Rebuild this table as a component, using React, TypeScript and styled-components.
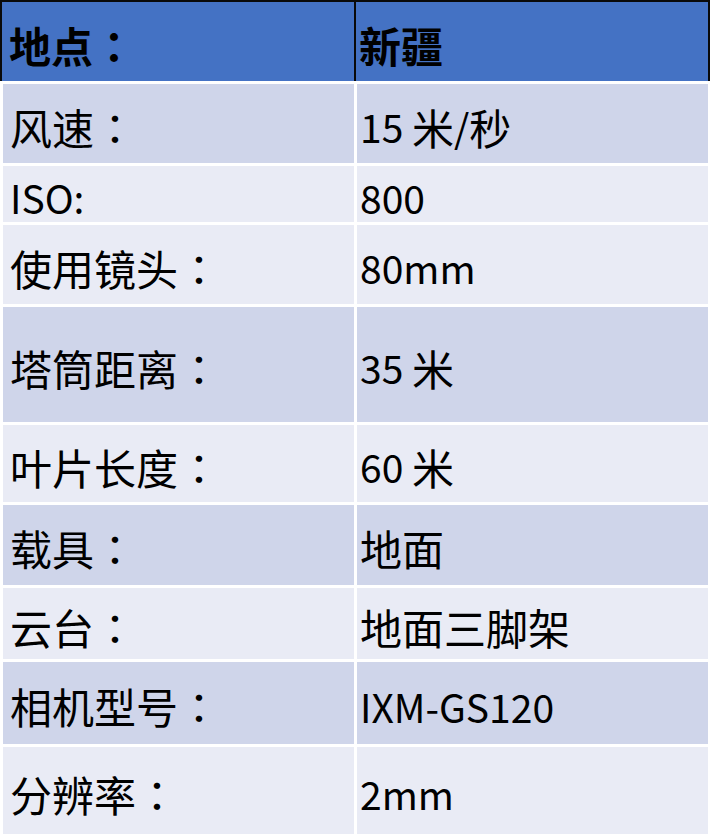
import React from "react";
import styled, { createGlobalStyle } from "styled-components";

const GlobalStyle = createGlobalStyle`
  html, body {
    margin: 0;
    padding: 0;
    background: #ffffff;
  }
  body {
    font-family: "Noto Sans CJK SC", "Noto Sans", sans-serif;
  }
`;

const Sheet = styled.div`
  width: 712px;
  display: flex;
  flex-direction: column;
  gap: 3px;
`;

const HeaderRow = styled.div`
  width: 710px;
  height: 81px;
  box-sizing: border-box;
  display: grid;
  grid-template-columns: 352px 2px 352px;
  border-top: 2px solid #0a0a0a;
  border-left: 2px solid #0a0a0a;
  border-right: 2px solid #0a0a0a;
  background: #4472c4;
`;

const HeaderDivider = styled.div`
  background: #0a0a0a;
`;

const HeaderCell = styled.div<{ $pad: number }>`
  display: flex;
  align-items: center;
  padding-left: ${(p) => p.$pad}px;
  padding-top: 6px;
  font-size: 42px;
  font-weight: 700;
  line-height: 1;
  color: #000000;
  white-space: nowrap;
`;

const Body = styled.div`
  display: grid;
  grid-template-columns: 351px 351px;
  column-gap: 3px;
  row-gap: 3px;
  padding-left: 3px;
`;

const Cell = styled.div<{ $h: number; $dark: boolean; $pad: number }>`
  height: ${(p) => p.$h}px;
  background: ${(p) => (p.$dark ? "#cfd5ea" : "#e9ebf5")};
  display: flex;
  align-items: center;
  box-sizing: border-box;
  padding-left: ${(p) => p.$pad}px;
  padding-top: 6px;
  font-size: 42px;
  line-height: 1;
  color: #000000;
  white-space: pre;
`;

const Latin = styled.span`
  font-size: 39px;
`;

const Colon = styled.span`
  font-family: "Noto Sans CJK TC", "Noto Sans CJK SC", sans-serif;
`;

function Text({ value }: { value: string }) {
  const parts = value.match(/[\x20-\x7e]+|[^\x20-\x7e]+/g) || [];
  return (
    <>
      {parts.map((part, i) => {
        if (/^[\x20-\x7e]+$/.test(part)) return <Latin key={i}>{part}</Latin>;
        if (part.endsWith("：")) {
          return (
            <React.Fragment key={i}>
              {part.slice(0, -1)}
              <Colon>：</Colon>
            </React.Fragment>
          );
        }
        return <React.Fragment key={i}>{part}</React.Fragment>;
      })}
    </>
  );
}

const rows: { label: string; value: string; h: number; dark: boolean }[] = [
  { label: "风速：", value: "15 米/秒", h: 79, dark: true },
  { label: "ISO:", value: "800", h: 56, dark: false },
  { label: "使用镜头：", value: "80mm", h: 79, dark: false },
  { label: "塔筒距离：", value: "35 米", h: 115, dark: true },
  { label: "叶片长度：", value: "60 米", h: 77, dark: false },
  { label: "载具：", value: "地面", h: 80, dark: true },
  { label: "云台：", value: "地面三脚架", h: 71, dark: false },
  { label: "相机型号：", value: "IXM-GS120", h: 82, dark: true },
  { label: "分辨率：", value: "2mm", h: 87, dark: false },
];

export default function App() {
  return (
    <>
      <GlobalStyle />
      <Sheet>
        <HeaderRow>
          <HeaderCell $pad={7}>
            <Text value="地点：" />
          </HeaderCell>
          <HeaderDivider />
          <HeaderCell $pad={3}>新疆</HeaderCell>
        </HeaderRow>
        <Body>
          {rows.map((r) => (
            <React.Fragment key={r.label}>
              <Cell $h={r.h} $dark={r.dark} $pad={7}>
                <Text value={r.label} />
              </Cell>
              <Cell $h={r.h} $dark={r.dark} $pad={3}>
                <Text value={r.value} />
              </Cell>
            </React.Fragment>
          ))}
        </Body>
      </Sheet>
    </>
  );
}
